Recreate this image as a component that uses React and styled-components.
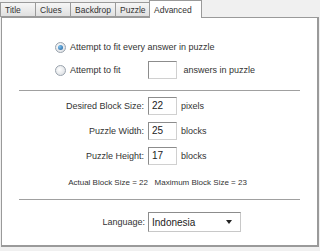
import React from "react";
import styled, { createGlobalStyle } from "styled-components";

const Global = createGlobalStyle`
  body {
    margin: 0;
    background: #ffffff;
    font-family: "Liberation Sans", "DejaVu Sans", sans-serif;
    font-size: 9px;
    color: #222;
  }
`;

const Frame = styled.div`
  width: 320px;
  height: 251px;
  background: #f0f0f0;
  display: flex;
  flex-direction: column;
`;

const TabStrip = styled.div`
  display: flex;
  align-items: flex-end;
  height: 17px;
  padding-left: 1px;
`;

const Tab = styled.div`
  height: ${({ $active }) => ($active ? "18px" : "15px")};
  width: ${({ $w }) => $w}px;
  box-sizing: border-box;
  border: 1px solid #9a9a9a;
  border-bottom: ${({ $active }) => ($active ? "none" : "1px solid #9a9a9a")};
  margin-left: -1px;
  background: ${({ $active }) =>
    $active ? "#ffffff" : "linear-gradient(#f6f6f6, #e0e0e0)"};
  display: flex;
  align-items: center;
  padding-left: 4px;
  font-size: 8.5px;
  color: #333;
  white-space: nowrap;
  overflow: hidden;
  position: relative;
  z-index: ${({ $active }) => ($active ? 2 : 1)};
  margin-bottom: ${({ $active }) => ($active ? "-1px" : "0")};
`;

const Panel = styled.div`
  margin: 0 1px;
  height: 230px;
  box-sizing: border-box;
  background: #ffffff;
  border: 1px solid #9a9a9a;
  border-right: 2px solid #9a9a9a;
  border-bottom: 2px solid #9a9a9a;
  display: flex;
  flex-direction: column;
  align-items: stretch;
`;

const RadioGroup = styled.div`
  display: flex;
  flex-direction: column;
  gap: 7px;
  padding: 21px 0 0 53px;
  height: 72px;
  box-sizing: border-box;
`;

const RadioRow = styled.label`
  display: flex;
  align-items: center;
  height: 16px;
  color: #333;
`;

const Radio = styled.span`
  width: 11px;
  height: 11px;
  box-sizing: border-box;
  border-radius: 50%;
  border: 1px solid #9aa3ad;
  background: radial-gradient(circle at 40% 40%, #ffffff, #d4d8dd);
  margin-right: 4px;
  display: flex;
  align-items: center;
  justify-content: center;
  &::after {
    content: "";
    display: ${({ $on }) => ($on ? "block" : "none")};
    width: 5px;
    height: 5px;
    border-radius: 50%;
    background: radial-gradient(circle at 35% 35%, #7cc0ee, #1d5d9a);
  }
`;

const Spacer = styled.span`
  width: ${({ $w }) => $w}px;
`;

const Box = styled.span`
  display: inline-block;
  box-sizing: border-box;
  width: 29px;
  height: 18px;
  border: 1px solid #8c8c8c;
  border-right-color: #d0d0d0;
  border-bottom-color: #d0d0d0;
  background: #fff;
  padding: 1px 3px;
  font-size: 10px;
  line-height: 13px;
  color: #222;
`;

const Rule = styled.div`
  height: 1px;
  background: #a0a0a0;
  margin: 0 17px;
`;

const Fields = styled.div`
  display: grid;
  grid-template-columns: 142px 29px auto;
  justify-content: start;
  column-gap: 4px;
  row-gap: 7px;
  align-items: center;
  padding-top: 6px;
`;

const FieldLabel = styled.span`
  text-align: right;
  color: #333;
`;

const Unit = styled.span`
  color: #333;
`;

const Info = styled.div`
  margin-top: 13px;
  text-align: center;
  font-size: 8px;
  color: #333;
  padding-right: 4px;
  height: 21px;
`;

const LangRow = styled.div`
  display: flex;
  align-items: center;
  padding: 12px 0 0 0;
`;

const LangLabel = styled.span`
  width: 143px;
  text-align: right;
  margin-right: 3px;
  color: #333;
`;

const Select = styled.div`
  box-sizing: border-box;
  width: 93px;
  height: 20px;
  border: 1px solid #8c8c8c;
  border-right-color: #c8c8c8;
  border-bottom-color: #c8c8c8;
  background: #fff;
  display: flex;
  align-items: center;
  justify-content: space-between;
  padding: 0 8px 0 3px;
  font-size: 10px;
  color: #222;
`;

const Caret = styled.span`
  width: 0;
  height: 0;
  border-left: 3px solid transparent;
  border-right: 3px solid transparent;
  border-top: 4px solid #222;
`;

const tabs = [
  ["Title", 36],
  ["Clues", 36],
  ["Backdrop", 46],
  ["Puzzle", 35],
  ["Advanced", 53],
];

const fields = [
  ["Desired Block Size:", "22", "pixels"],
  ["Puzzle Width:", "25", "blocks"],
  ["Puzzle Height:", "17", "blocks"],
];

export default function App() {
  return (
    <>
      <Global />
      <Frame>
        <TabStrip>
          {tabs.map(([t, w], i) => (
            <Tab key={t} $w={w} $active={i === 4}>
              {t}
            </Tab>
          ))}
        </TabStrip>
        <Panel>
          <RadioGroup>
            <RadioRow>
              <Radio $on />
              Attempt to fit every answer in puzzle
            </RadioRow>
            <RadioRow>
              <Radio />
              Attempt to fit
              <Spacer $w={27} />
              <Box />
              <Spacer $w={7} />
              answers in puzzle
            </RadioRow>
          </RadioGroup>
          <Rule />
          <Fields>
            {fields.map(([l, v, u]) => (
              <React.Fragment key={l}>
                <FieldLabel>{l}</FieldLabel>
                <Box>{v}</Box>
                <Unit>{u}</Unit>
              </React.Fragment>
            ))}
          </Fields>
          <Info>Actual Block Size = 22&nbsp;&nbsp;&nbsp;Maximum Block Size = 23</Info>
          <Rule />
          <LangRow>
            <LangLabel>Language:</LangLabel>
            <Select>
              Indonesia
              <Caret />
            </Select>
          </LangRow>
        </Panel>
      </Frame>
    </>
  );
}
